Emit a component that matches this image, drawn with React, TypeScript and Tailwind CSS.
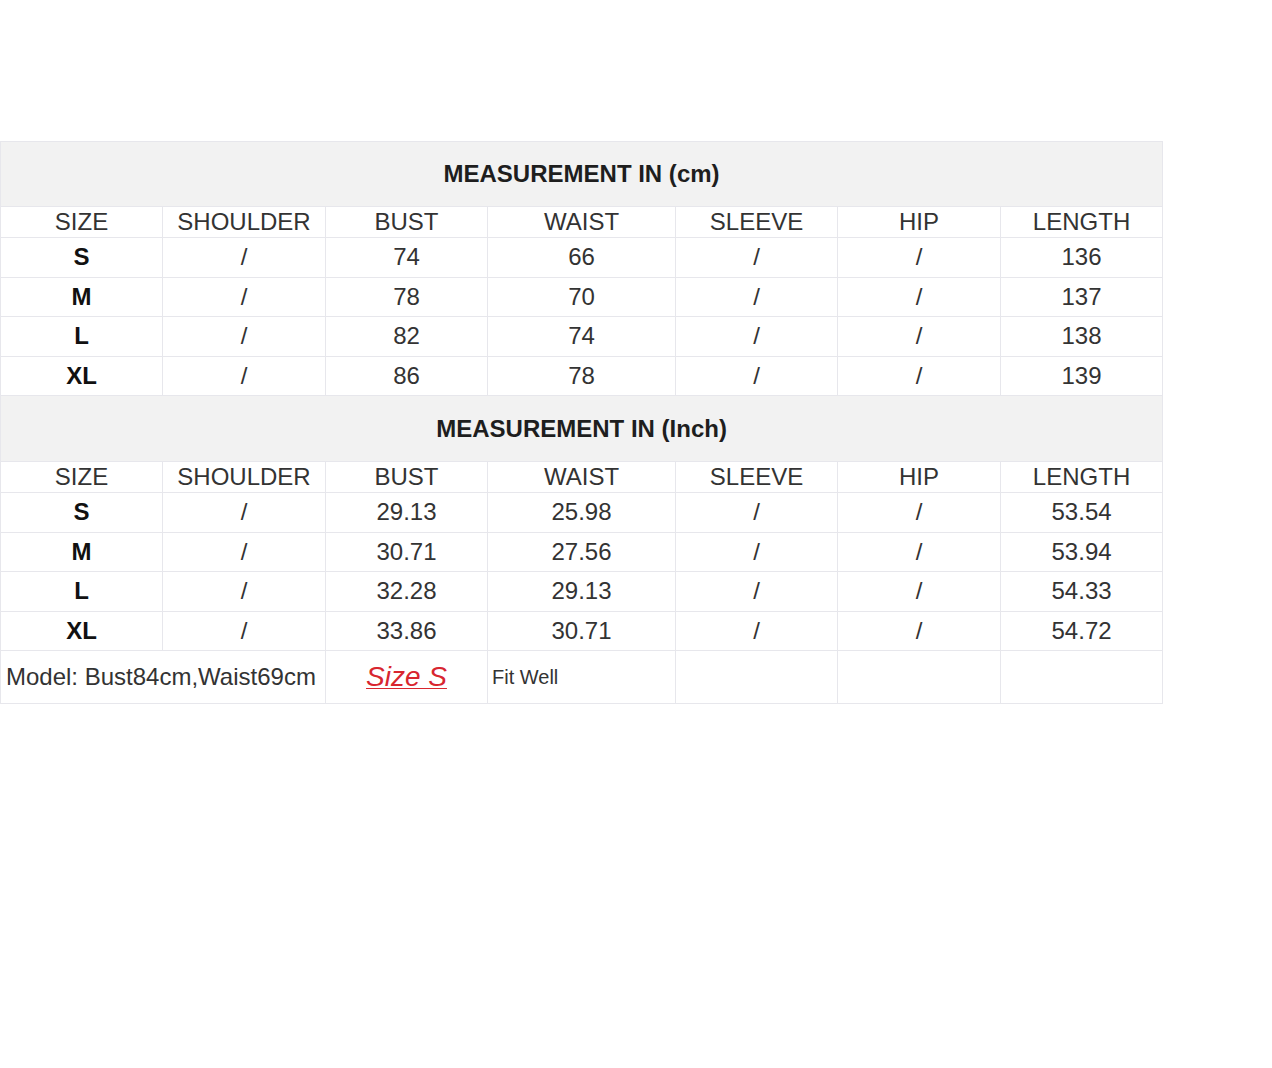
const cols = ["SIZE", "SHOULDER", "BUST", "WAIST", "SLEEVE", "HIP", "LENGTH"];
const widths = [162, 163, 162, 188, 162, 163, 162];

type Row = [string, string, string, string, string, string, string];

const cmRows: Row[] = [
  ["S", "/", "74", "66", "/", "/", "136"],
  ["M", "/", "78", "70", "/", "/", "137"],
  ["L", "/", "82", "74", "/", "/", "138"],
  ["XL", "/", "86", "78", "/", "/", "139"],
];

const inchRows: Row[] = [
  ["S", "/", "29.13", "25.98", "/", "/", "53.54"],
  ["M", "/", "30.71", "27.56", "/", "/", "53.94"],
  ["L", "/", "32.28", "29.13", "/", "/", "54.33"],
  ["XL", "/", "33.86", "30.71", "/", "/", "54.72"],
];

const cell = "border border-[#e7e7ec] p-0 text-center align-middle";

function Section({ unit, rows, first }: { unit: string; rows: Row[]; first?: boolean }) {
  return (
    <>
      <tr className={first ? "h-[65px]" : "h-[66px]"}>
        <td colSpan={7} className={`${cell} bg-[#f2f2f2] text-[24px] font-bold text-[#1e1e1e]`}>
          MEASUREMENT IN ({unit})
        </td>
      </tr>
      <tr className="h-[31px]">
        {cols.map((c) => (
          <td key={c} className={`${cell} leading-none text-[#333]`}>
            {c}
          </td>
        ))}
      </tr>
      {rows.map((r) => (
        <tr key={r[0]} className="h-[39.5px]">
          {r.map((v, i) => (
            <td
              key={i}
              className={`${cell} leading-none ${i === 0 ? "font-bold text-[#111]" : "text-[#333]"}`}
            >
              {v}
            </td>
          ))}
        </tr>
      ))}
    </>
  );
}

export default function App() {
  return (
    <div className="min-h-[1068px] w-[1272px] bg-white pt-[141px] font-['Liberation_Sans',Arial,sans-serif] text-[24px]">
      <table className="table-fixed border-collapse" style={{ width: 1162 }}>
        <colgroup>
          {widths.map((w, i) => (
            <col key={i} style={{ width: w }} />
          ))}
        </colgroup>
        <tbody>
          <Section unit="cm" rows={cmRows} first />
          <Section unit="Inch" rows={inchRows} />
          <tr className="h-[53px]">
            <td colSpan={2} className={`${cell} pl-[5px] text-left whitespace-nowrap text-[#333]`}>
              Model: Bust84cm,Waist69cm
            </td>
            <td className={`${cell} text-[28px] italic text-[#d8262f] underline decoration-1 underline-offset-2`}>
              Size S
            </td>
            <td className={`${cell} pl-[4px] text-left text-[20px] text-[#333]`}>Fit Well</td>
            <td className={cell}></td>
            <td className={cell}></td>
            <td className={cell}></td>
          </tr>
        </tbody>
      </table>
    </div>
  );
}
